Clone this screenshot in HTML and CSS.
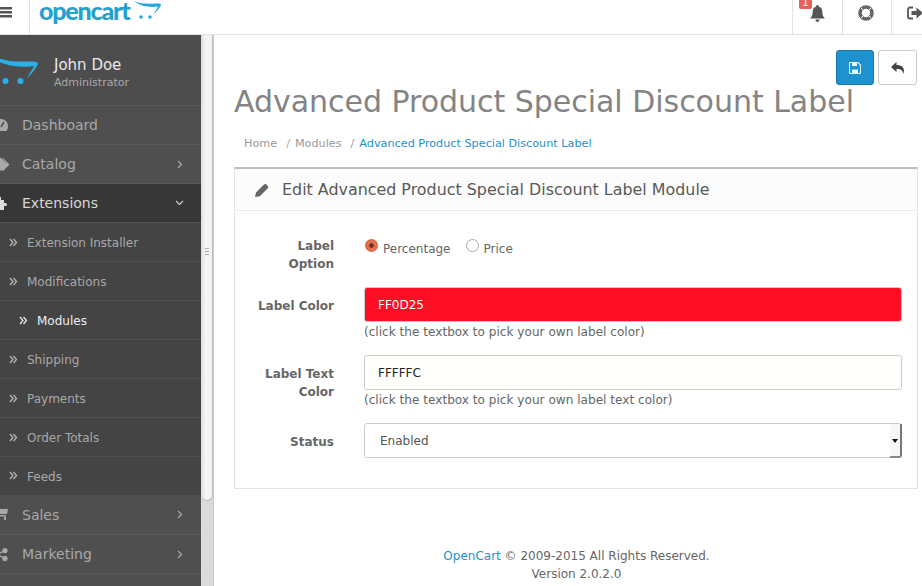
FILE: index.html
```html
<!DOCTYPE html>
<html lang="en">
<head>
  <meta charset="UTF-8">
  <title>Advanced Product Special Discount Label</title>
  <link rel="stylesheet" href="styles.css">
</head>
<body>
  <svg class="defs" width="0" height="0">
    <symbol id="dbl" viewBox="0 0 9 9"><path d="M1 1l3 3.500L1 8M4.500 1l3 3.500-3 3.500" fill="none" stroke="currentColor" stroke-width="1.200"/></symbol>
  </svg>

  <!-- Top bar -->
  <header class="topbar">
    <div class="burger">
      <svg width="12" height="11" viewBox="0 0 12 11"><path d="M0 0h12v2.500H0zM0 4h12v2.500H0zM0 8h12v2.500H0z" fill="#555"/></svg>
    </div>
    <div class="logo">
      <span class="logo-text">opencart</span>
      <svg class="logo-cart" width="28" height="20" viewBox="0 0 28 20"><path d="M0 1c6 3 14 3 22 2.500 3-.2 5 .2 5 1.500 0 1.500-5 7-7.500 9.500 1.500-3 4-6.500 4.500-8-7 1-17 .5-24-5.500z" fill="#23a8dc"/><circle cx="7" cy="17" r="1.800" fill="#23a8dc"/><circle cx="16" cy="17" r="1.800" fill="#23a8dc"/></svg>
    </div>
    <div class="top-right">
      <div class="top-btn">
        <span class="badge">1</span>
        <svg width="15" height="17" viewBox="0 0 15 17"><path d="M7.500 0c1 0 1.300.7 1.200 1.400C11 2 12.300 4 12.300 6.500c0 4 1 5.500 2.700 7H0c1.700-1.500 2.700-3 2.700-7 0-2.500 1.300-4.500 3.600-5.100C6.200.7 6.500 0 7.500 0zM5.500 14.500h4C9.500 16 8.600 17 7.500 17s-2-1-2-2.500z" fill="#555"/></svg>
      </div>
      <div class="top-btn">
        <svg width="16" height="16" viewBox="0 0 16 16"><circle cx="8" cy="8" r="6" fill="none" stroke="#666" stroke-width="3.600"/><path d="M3 3l3 3M13 3l-3 3M3 13l3-3M13 13l-3-3" stroke="#fff" stroke-width="1"/></svg>
      </div>
      <div class="top-btn">
        <svg width="16" height="14" viewBox="0 0 16 14"><path d="M6 1.500H3C1.800 1.500 1 2.300 1 3.500v7c0 1.200.8 2 2 2h3" fill="none" stroke="#555" stroke-width="1.800"/><path d="M4.500 5h5V1.500L16 7l-6.500 5.500V9h-5z" fill="#555"/></svg>
      </div>
    </div>
  </header>

  <div class="layout">
    <!-- Left column -->
    <nav class="sidebar">
      <div class="profile">
        <svg class="profile-cart" width="38" height="30" viewBox="0 0 38 30"><path d="M-4 1c8 4 20 5 31 4.500 6-.3 11 0 11 2 0 2.500-7 11-11 15 1.500-4 6-9.500 7-12.500-10 1.500-27 1-38-6z" fill="#2ab0e6"/><circle cx="5.500" cy="25" r="3" fill="#2ab0e6"/><circle cx="20.500" cy="25" r="3" fill="#2ab0e6"/></svg>
        <div>
          <div class="profile-name">John Doe</div>
          <div class="profile-role">Administrator</div>
        </div>
      </div>
      <ul class="menu">
        <li class="item">
          <svg class="item-icon" width="14" height="12" viewBox="0 0 14 12"><path d="M7 0a7 7 0 0 1 7 7c0 2-.6 3.500-1.500 5h-11C.6 10.500 0 9 0 7a7 7 0 0 1 7-7z" fill="#aaa"/><path d="M7 8l3-5" stroke="#4f4f4f" stroke-width="1.500"/></svg>
          <span>Dashboard</span>
        </li>
        <li class="item">
          <svg class="item-icon" width="16" height="13" viewBox="0 0 16 13"><path d="M0 0h7l6 6.500L7 13 0 6.500zM9 0l6.500 6.500L9 13l-1-1 5-5.500L8 0z" fill="#aaa"/></svg>
          <span>Catalog</span>
          <svg class="chev" width="6" height="9" viewBox="0 0 6 9"><path d="M1 1l3.500 3.500L1 8" fill="none" stroke="#aaa" stroke-width="1.200"/></svg>
        </li>
        <li class="item open">
          <svg class="item-icon" width="14" height="13" viewBox="0 0 14 13"><path d="M0 3h4V1a1.500 1.500 0 0 1 3 0v2h3v3h1.500a1.500 1.500 0 0 1 0 3H10v4H0z" fill="#ddd"/></svg>
          <span>Extensions</span>
          <svg class="chev down" width="9" height="6" viewBox="0 0 9 6"><path d="M1 1l3.500 3.500L8 1" fill="none" stroke="#ccc" stroke-width="1.200"/></svg>
        </li>
        <li class="sub"><svg class="dbl" width="9" height="9"><use href="#dbl"/></svg>Extension Installer</li>
        <li class="sub"><svg class="dbl" width="9" height="9"><use href="#dbl"/></svg>Modifications</li>
        <li class="sub current"><svg class="dbl" width="9" height="9"><use href="#dbl"/></svg>Modules</li>
        <li class="sub"><svg class="dbl" width="9" height="9"><use href="#dbl"/></svg>Shipping</li>
        <li class="sub"><svg class="dbl" width="9" height="9"><use href="#dbl"/></svg>Payments</li>
        <li class="sub"><svg class="dbl" width="9" height="9"><use href="#dbl"/></svg>Order Totals</li>
        <li class="sub last"><svg class="dbl" width="9" height="9"><use href="#dbl"/></svg>Feeds</li>
        <li class="item">
          <svg class="item-icon" width="14" height="12" viewBox="0 0 14 12"><path d="M0 1h14l-1 5H2zM2 7h10v1.500H2zM2 9h2v3H2zM10 9h2v3h-2z" fill="#aaa"/></svg>
          <span>Sales</span>
          <svg class="chev" width="6" height="9" viewBox="0 0 6 9"><path d="M1 1l3.500 3.500L1 8" fill="none" stroke="#aaa" stroke-width="1.200"/></svg>
        </li>
        <li class="item">
          <svg class="item-icon" width="14" height="13" viewBox="0 0 14 13"><circle cx="3" cy="6.500" r="2.600" fill="#aaa"/><circle cx="11" cy="2.600" r="2.600" fill="#aaa"/><circle cx="11" cy="10.400" r="2.600" fill="#aaa"/><path d="M3 6.500l8-3.900M3 6.500l8 3.900" stroke="#aaa" stroke-width="1.300"/></svg>
          <span>Marketing</span>
          <svg class="chev" width="6" height="9" viewBox="0 0 6 9"><path d="M1 1l3.500 3.500L1 8" fill="none" stroke="#aaa" stroke-width="1.200"/></svg>
        </li>
        <li class="item"></li>
      </ul>
    </nav>

    <!-- Scrollbar of the left column -->
    <div class="side-scroll">
      <div class="side-thumb"><span class="grip"></span></div>
    </div>

    <!-- Main content -->
    <main class="content">
      <div class="actions">
        <button class="btn btn-save" type="button">
          <svg width="12" height="12" viewBox="0 0 12 12"><path d="M1 .5h8L11.500 3v7.500a1 1 0 0 1-1 1h-9a1 1 0 0 1-1-1v-9a1 1 0 0 1 .5-1z" fill="none" stroke="#dff" stroke-width="1.100"/><path d="M3 1h5v3H3zM3 7.500h6v4H3z" fill="#dff"/></svg>
        </button>
        <button class="btn btn-back" type="button">
          <svg width="13" height="12" viewBox="0 0 13 12"><path d="M5.500 0v3C10 3 13 5 13 9c0 1-.3 2-.8 3 0-3-1.700-5-6.700-5v3L0 5z" fill="#444"/></svg>
        </button>
      </div>
      <h1 class="title">Advanced Product Special Discount Label</h1>
      <ul class="crumbs">
        <li>Home</li>
        <li><span class="slash">/</span>Modules</li>
        <li class="here"><span class="slash">/</span>Advanced Product Special Discount Label</li>
      </ul>

      <section class="panel">
        <div class="panel-head">
          <svg width="14" height="14" viewBox="0 0 14 14"><path d="M0 14l1-4.500 8-8a1.500 1.500 0 0 1 2-.2l2 2a1.500 1.500 0 0 1-.2 2l-8 8z" fill="#666"/></svg>
          <span>Edit Advanced Product Special Discount Label Module</span>
        </div>
        <form class="panel-body">
          <div class="row row-radio">
            <label class="lbl">Label Option</label>
            <div class="field radios">
              <label class="radio"><input type="radio" name="opt" checked>Percentage</label>
              <label class="radio"><input type="radio" name="opt">Price</label>
            </div>
          </div>
          <div class="row row-color">
            <label class="lbl">Label Color</label>
            <div class="field">
              <input class="box box-red" type="text" value="FF0D25">
              <div class="help">(click the textbox to pick your own label color)</div>
            </div>
          </div>
          <div class="row row-text">
            <label class="lbl">Label Text Color</label>
            <div class="field">
              <input class="box box-cream" type="text" value="FFFFFC">
              <div class="help">(click the textbox to pick your own label text color)</div>
            </div>
          </div>
          <div class="row row-status">
            <label class="lbl">Status</label>
            <div class="field select-wrap">
              <select class="box box-select">
                <option>Enabled</option>
                <option>Disabled</option>
              </select>
              <span class="select-arrow"></span>
            </div>
          </div>
        </form>
      </section>

      <footer class="foot">
        <a href="#">OpenCart</a> © 2009-2015 All Rights Reserved.<br>Version 2.0.2.0
      </footer>
    </main>
  </div>
</body>
</html>
```

FILE: styles.css
```css
/* Reset + base */
* { margin:0; padding:0; box-sizing:border-box; }
html, body { width:922px; height:586px; overflow:hidden; }
body { background:#fff; font-family:"DejaVu Sans", sans-serif; font-size:12px; color:#666; }
ul { list-style:none; }
.defs { display:block; height:0; }

/* Top bar */
.topbar {
  display:flex; align-items:center;
  height:35px;
  border-bottom:1px solid #e3e3e3;
  background:#fff;
}
.burger {
  width:30px; height:34px;
  border-right:1px solid #e3e3e3;
  display:flex; align-items:center;
}
.burger svg { margin-top:-9px; }
.logo { display:flex; align-items:flex-start; margin-left:9px; height:34px; }
.logo-text {
  font-family:"Lato", sans-serif; font-weight:900;
  font-size:25px; line-height:21px; letter-spacing:-1.200px; color:#23a1d1;
}
.logo-cart { margin:0 0 0 5px; }
.top-right { display:flex; margin-left:auto; margin-right:-18px; }
.top-btn {
  position:relative;
  width:49px; height:34px;
  border-left:1px solid #e3e3e3;
  display:flex; align-items:center; justify-content:center;
}
.top-btn:nth-child(1) { width:50px; }
.top-btn:nth-child(1) svg { margin-top:-8px; margin-left:-1px; }
.top-btn:nth-child(2) svg { margin-top:-9px; margin-left:-2px; }
.top-btn:nth-child(3) svg { margin-top:-8px; margin-left:-2px; }
.badge {
  position:absolute; left:6px; top:-4px;
  width:13px; height:13px;
  background:#e9605b; color:#fff; border-radius:2px;
  font-size:11px; line-height:13px; text-align:center;
}

/* Page columns */
.layout { display:flex; height:551px; }

/* Left column */
.sidebar { width:201px; flex:none; background:#4d4d4d; overflow:hidden; }
.profile {
  display:flex; align-items:center; gap:16px;
  height:71px;
  border-bottom:1px solid #575757;
}
.profile-cart { flex:none; margin-top:2px; margin-left:0; }
.profile-name { font-size:15px; line-height:17px; color:#e9e9e9; padding-top:7px; }
.profile-role { font-size:11px; line-height:17px; color:#a8a8a8; }

.item {
  display:flex; align-items:center;
  height:39px;
  padding-left:22px; padding-right:18px;
  background:#4f4f4f;
  border-bottom:1px solid #5a5a5a;
  font-size:14px; color:#a9a9a9;
  position:relative;
}
.item-icon { position:absolute; left:-6px; top:13px; }
.item .chev { margin-left:auto; }
.item .chev.down { margin-right:-1px; }
.item.open { background:#373737; color:#d8d8d8; border-bottom-color:#555; }
.sub {
  display:flex; align-items:center;
  height:39px;
  padding-left:9px; padding-top:2px;
  background:#444;
  border-bottom:1px solid #505050;
  font-size:12px; color:#a9a9a9;
}
.sub.last { border-bottom:0; height:38px; padding-top:1px; }
.sub.last + .item { height:40px; }
.dbl { flex:none; margin-right:9px; margin-top:-2px; color:#bbb; }
.sub.current { padding-left:19px; color:#e8eef5; }
.sub.current .dbl { color:#eee; }

/* Scrollbar strip */
.side-scroll {
  width:13px; flex:none;
  background:#dcdad6;
  border-right:1px solid #ccc;
}
.side-thumb {
  height:466px;
  background:linear-gradient(to right, #dedcd8, #f6f5f3 40%, #f3f2f0);
  border:1px solid #bdbcb8; border-top:0; border-left:0;
  border-radius:0 0 6px 6px;
  display:flex; align-items:center; justify-content:center;
}
.grip {
  width:4px; height:7px; margin-top:-32px;
  background:repeating-linear-gradient(to bottom, #aaa 0, #aaa 1px, transparent 1px, transparent 3px);
}

/* Main content */
.content { width:724px; flex:none; padding:15px 20px 0; }
.actions { display:flex; justify-content:flex-end; gap:4px; padding-right:1px; }
.btn {
  width:39px; height:35px;
  border:1px solid #ccc; border-radius:3px; background:#fff;
  display:flex; align-items:center; justify-content:center;
}
.btn-save { width:38px; background:#1e91cf; border-color:#1978ab; }
.title {
  font-size:30px; font-weight:400; line-height:33px;
  letter-spacing:-.025px;
  color:#848484;
}
.crumbs {
  display:flex; padding-left:10px; margin-top:18px;
  font-size:11.230px; line-height:15px; color:#999;
}
.crumbs li { margin-right:9px; }
.slash { margin-right:5px; color:#aaa; }
.here { color:#1e91cf; }
.here .slash { color:#999; }

.panel {
  margin-top:16px;
  border:1px solid #e4e4e4; border-top:2px solid #bfbfbf;
  height:322px;
}
.panel-head {
  display:flex; align-items:center; gap:13px;
  height:42px; padding-left:20px;
  background:#fcfcfc; border-bottom:1px solid #e8e8e8;
  font-size:15.900px; color:#595959;
}
.panel-body { padding-top:26px; padding-right:15px; }
.row { display:flex; }
.lbl {
  width:99px; flex:none; margin-right:30px;
  text-align:right; font-weight:700; color:#666;
  font-size:12px; line-height:18px;
  padding-left:24px;
}
.field { flex:1; }
.row-radio { height:50px; }
.row-color { height:68px; }
.row-color .lbl { padding-top:10px; padding-left:0; }
.row-text { height:68px; }
.row-text .lbl { padding-top:10px; padding-left:24px; }
.row-status .lbl { padding-top:10px; }
.radios { display:flex; gap:15px; font-size:12px; line-height:18px; }
.radio { display:flex; align-items:center; height:18px; margin-top:3px; color:#666; }
.radio:first-child { margin-left:1px; }
.radio input {
  appearance:none;
  width:13px; height:13px;
  margin-right:5px; margin-top:-7px;
  border:1px solid #aaa; border-radius:50%; background:#fff;
}
.radio input:checked {
  background:radial-gradient(circle, #6b3a2a 0, #6b3a2a 2px, #e5704a 2.600px);
  border-color:#d0603c;
}

.box {
  display:block; width:100%; height:35px;
  border:1px solid #ccc; border-radius:3px;
  padding:0 13px;
  font-family:"DejaVu Sans", sans-serif; font-size:12px;
}
.box-red { background:#ff0d25; color:#fff; }
.box-cream { background:#fffffc; color:#222; }
.box-select { appearance:none; background:#fff; color:#555; padding-left:15px; }
.help { font-size:12.100px; line-height:18px; margin-top:1px; color:#666; }
.select-wrap { position:relative; }
.select-arrow {
  position:absolute; right:0; top:1px;
  width:12px; height:34px;
  background:#f7f7f7;
  border-right:2px solid #777; border-bottom:2px solid #888;
  border-radius:0 0 3px 0;
}
.select-arrow::after {
  content:""; position:absolute; left:2px; top:15px;
  border:3px solid transparent; border-top:4px solid #111; border-bottom:0;
}

.foot {
  margin-top:58px; padding-left:1px; text-align:center; font-size:12px; line-height:18px; color:#666;
}
.foot a { color:#1e91cf; text-decoration:none; }
```
